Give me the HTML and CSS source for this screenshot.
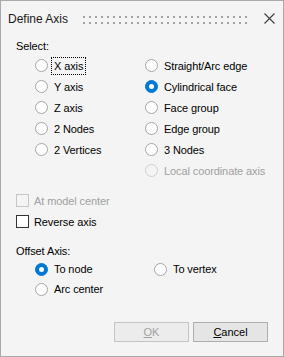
FILE: index.html
```html
<!DOCTYPE html>
<html>
<head>
<meta charset="utf-8">
<link rel="stylesheet" href="styles.css">
</head>
<body>
<div class="dialog">
  <div class="titlebar">
    <span class="title">Define Axis</span>
    <svg class="grip" width="168" height="8" viewBox="0 0 168 8">
      <defs>
        <pattern id="dots" width="6" height="6" patternUnits="userSpaceOnUse">
          <rect x="0" y="0" width="2" height="2" fill="#a3a3a3"/>
        </pattern>
      </defs>
      <rect x="0" y="0" width="168" height="8" fill="url(#dots)"/>
    </svg>
    <svg class="close" width="11" height="11" viewBox="0 0 11 11">
      <path d="M0.5 0.5 L10.5 10.5 M10.5 0.5 L0.5 10.5" stroke="#3c3c3c" stroke-width="1.1" fill="none"/>
    </svg>
  </div>

  <div class="content">
    <div class="group-label">Select:</div>
    <div class="options">
      <div class="col col-left">
        <div class="opt"><span class="radio"></span><span class="lbl focus">X axis</span></div>
        <div class="opt"><span class="radio"></span><span class="lbl">Y axis</span></div>
        <div class="opt"><span class="radio"></span><span class="lbl">Z axis</span></div>
        <div class="opt"><span class="radio"></span><span class="lbl">2 Nodes</span></div>
        <div class="opt"><span class="radio"></span><span class="lbl">2 Vertices</span></div>
      </div>
      <div class="col col-right">
        <div class="opt"><span class="radio"></span><span class="lbl">Straight/Arc edge</span></div>
        <div class="opt"><span class="radio checked"></span><span class="lbl">Cylindrical face</span></div>
        <div class="opt"><span class="radio"></span><span class="lbl">Face group</span></div>
        <div class="opt"><span class="radio"></span><span class="lbl">Edge group</span></div>
        <div class="opt"><span class="radio"></span><span class="lbl">3 Nodes</span></div>
        <div class="opt disabled"><span class="radio"></span><span class="lbl">Local coordinate axis</span></div>
      </div>
    </div>

    <div class="checks">
      <div class="chk disabled"><span class="box"></span><span class="lbl">At model center</span></div>
      <div class="chk"><span class="box"></span><span class="lbl">Reverse axis</span></div>
    </div>

    <div class="group-label offset-label">Offset Axis:</div>
    <div class="offset">
      <div class="opt"><span class="radio checked"></span><span class="lbl">To node</span></div>
      <div class="opt"><span class="radio"></span><span class="lbl">To vertex</span></div>
      <div class="opt"><span class="radio"></span><span class="lbl">Arc center</span></div>
    </div>

    <div class="buttons">
      <button class="btn" disabled><u>O</u>K</button>
      <button class="btn"><u>C</u>ancel</button>
    </div>
  </div>
</div>
</body>
</html>
```

FILE: styles.css
```css
* { box-sizing: border-box; }
html, body {
  margin: 0;
  padding: 0;
  background: #f4f4f4;
}
body {
  font-family: "Liberation Sans", Arial, sans-serif;
  font-size: 11px;
  letter-spacing: -0.1px;
  color: #000;
}
.dialog {
  width: 284px;
  height: 357px;
  border: 1px solid #a9a9a9;
  background: #f4f4f4;
  display: flex;
  flex-direction: column;
}
.titlebar {
  height: 35px;
  display: flex;
  align-items: center;
  padding-left: 7px;
}
.title {
  font-size: 12px;
  letter-spacing: 0;
  color: #1a1a1a;
  width: 75px;
  line-height: 14px;
  padding-top: 1px;
}
.grip {
  display: block;
  margin-top: 2px;
}
.close {
  display: block;
  margin-left: 13px;
}
.content {
  padding-left: 15px;
  display: flex;
  flex-direction: column;
}
.group-label {
  line-height: 14px;
  height: 14px;
  margin-top: 3px;
}
.options {
  display: flex;
  margin-top: 2px;
  padding-left: 19px;
}
.col { display: flex; flex-direction: column; }
.col-left { width: 110px; }
.opt {
  height: 21px;
  display: flex;
  align-items: center;
}
.radio {
  width: 13px;
  height: 13px;
  border-radius: 50%;
  border: 1px solid #a5a5a5;
  background: #fff;
  flex: none;
  position: relative;
}
.radio.checked {
  background: #0078d7;
  border-color: #0078d7;
}
.radio.checked::after {
  content: "";
  position: absolute;
  left: 3px;
  top: 3px;
  width: 5px;
  height: 5px;
  border-radius: 50%;
  background: #fff;
}
.lbl {
  margin-left: 3px;
  padding: 0 2px;
  border: 1px dotted transparent;
  line-height: 14px;
  height: 18px;
  display: flex;
  align-items: center;
  white-space: nowrap;
}
.lbl.focus { border-color: #000; }
.disabled .lbl { color: #a0a0a0; }
.disabled .radio { border-color: #cfcfcf; background: #f4f4f4; }
.checks {
  margin-top: 9px;
  display: flex;
  flex-direction: column;
}
.chk {
  height: 21px;
  display: flex;
  align-items: center;
}
.box {
  width: 13px;
  height: 13px;
  border: 1px solid #333;
  background: #fff;
  flex: none;
}
.disabled .box { border-color: #c6c6c6; background: #f4f4f4; }
.chk .lbl { margin-left: 2px; }
.offset-label { margin-top: 12px; }
.offset {
  display: grid;
  grid-template-columns: 119px auto;
  grid-auto-rows: 20px;
  padding-left: 19px;
  margin-top: 1px;
}
.offset .opt { height: 20px; }
.buttons {
  display: flex;
  justify-content: flex-end;
  gap: 4px;
  padding-right: 15px;
  margin-top: 23px;
}
.btn {
  width: 75px;
  height: 20px;
  border: 1px solid #adadad;
  background: #e5e5e5;
  font-family: "Liberation Sans", Arial, sans-serif;
  font-size: 11px;
  color: #000;
  padding: 0;
  margin: 0;
}
.btn:disabled {
  border-color: #c4c4c4;
  background: #ececec;
  color: #a0a0a0;
}
```
